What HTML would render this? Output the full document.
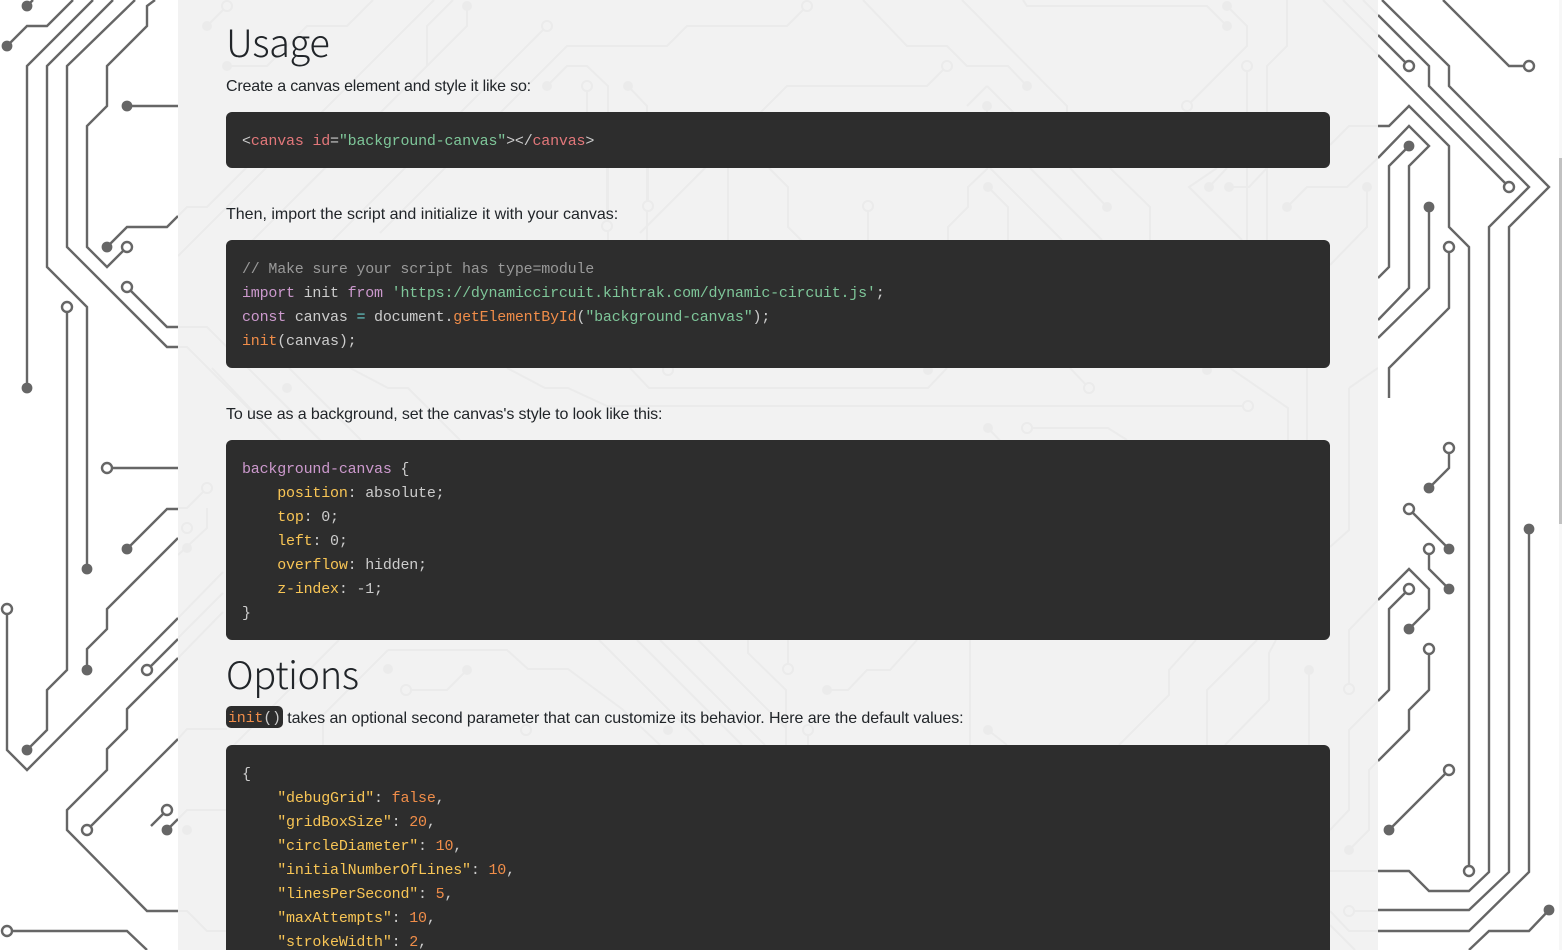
<!DOCTYPE html>
<html><head><meta charset="utf-8"><title>Dynamic Circuit</title>
<style>
html,body{margin:0;padding:0;width:1562px;height:950px;overflow:hidden;background:#fff}
#bg,#ghost{position:absolute;left:0;top:0}
#panel{position:absolute;left:178px;top:0;width:1200px;height:950px;background:#f2f2f2;overflow:hidden}
#ghost{left:-178px}
.t{position:absolute;left:48px;margin:0;color:#212529;font:16px/24px "Liberation Sans",sans-serif;white-space:nowrap}
.h{position:absolute;left:48px;margin:0;color:#212529;font:200 38px/48px "Noto Sans CJK JP","Liberation Sans",sans-serif;letter-spacing:-.4px;white-space:nowrap}
pre{position:absolute;left:48px;width:1072px;margin:0;padding:18px 16px 14px;background:#2d2d2d;border-radius:6px;color:#ccc;font:15px/24px "Liberation Mono",monospace;letter-spacing:-.2px;overflow:hidden}
code{background:#2d2d2d;color:#ccc;font:15px/18px "Liberation Mono",monospace;letter-spacing:-.2px;border-radius:5px;padding:4px 2px 0;display:inline-block;height:18px;vertical-align:baseline;position:relative;top:-1px}
.r{color:#e2777a}.g{color:#7ec699}.c{color:#999}.k{color:#cc99cd}.f{color:#f08d49}.y{color:#f8c555}.o{color:#67cdcc}
#sb{position:absolute;left:1559px;top:158px;width:3px;height:366px;background:#c1c1c1}
#st{position:absolute;left:1559px;top:0;width:3px;height:950px;background:#f7f7f7}
</style></head><body>
<svg id="bg" width="1562" height="950" fill="none" stroke="#666" stroke-width="2.4">
<path d="M33 0L27 6M73 0L47 26H27L7 46M93 0L27 66V388M113 0L47 66V267L87 307V568M135 0L67 66V247L167 347H178M155 0L147 6V26L107 66V106L87 126V247L107 267L127 247M127 106H178M107 247L127 227H167L178 216M127 287L167 327H178M67 307V670L47 690V730L27 750M107 468H178M127 549L167 509H178M178 538L107 609V629L87 649V670M7 609V750L27 770L178 618M147 670L178 639M178 658L127 709V729L107 749V770L67 810V830L147 911H178M87 830L178 739M167 810L151 826M167 830L178 819M7 931H127L147 950"/>
<path d="M1382 0L1449 66V86L1549 187L1509 227V872L1469 910H1378M1378 15L1429 66V86L1529 187L1489 227V872L1469 891H1429L1409 871H1378M1409 66L1378 35M1378 55L1509 187M1529 66H1509L1443 0M1378 126H1389L1409 106L1449 146V227L1469 247V871M1378 158L1409 126L1429 146L1409 166V288L1378 320M1409 146L1389 166V267L1378 278M1429 207V288L1378 338M1449 247V308L1389 368V398M1449 448V468L1429 488M1409 509L1449 549M1429 549V569L1449 589M1378 600L1409 569L1429 589V609L1409 629M1409 589L1389 609V690L1378 701M1429 649V690L1409 710V730L1378 761M1449 770L1389 830M1529 529V872L1469 931H1378M1549 910L1529 931H1489L1469 950"/>
<g fill="#666" stroke="none">
<circle cx="27" cy="6" r="5.4"/><circle cx="7" cy="46" r="5.4"/><circle cx="27" cy="388" r="5.4"/><circle cx="87" cy="569" r="5.4"/><circle cx="127" cy="106" r="5.4"/><circle cx="107" cy="247" r="5.4"/><circle cx="127" cy="549" r="5.4"/><circle cx="87" cy="670" r="5.4"/><circle cx="27" cy="750" r="5.4"/><circle cx="167" cy="830" r="5.4"/>
<circle cx="1409" cy="146" r="5.4"/><circle cx="1429" cy="207" r="5.4"/><circle cx="1429" cy="488" r="5.4"/><circle cx="1449" cy="549" r="5.4"/><circle cx="1449" cy="589" r="5.4"/><circle cx="1409" cy="629" r="5.4"/><circle cx="1389" cy="830" r="5.4"/><circle cx="1529" cy="529" r="5.4"/><circle cx="1549" cy="910" r="5.4"/>
</g>
<g fill="#fff">
<circle cx="127" cy="247" r="5"/><circle cx="127" cy="287" r="5"/><circle cx="67" cy="307" r="5"/><circle cx="107" cy="468" r="5"/><circle cx="7" cy="609" r="5"/><circle cx="147" cy="670" r="5"/><circle cx="87" cy="830" r="5"/><circle cx="167" cy="810" r="5"/><circle cx="7" cy="931" r="5"/>
<circle cx="1409" cy="66" r="5"/><circle cx="1529" cy="66" r="5"/><circle cx="1509" cy="187" r="5"/><circle cx="1449" cy="247" r="5"/><circle cx="1449" cy="448" r="5"/><circle cx="1409" cy="509" r="5"/><circle cx="1429" cy="549" r="5"/><circle cx="1409" cy="589" r="5"/><circle cx="1429" cy="649" r="5"/><circle cx="1449" cy="770" r="5"/><circle cx="1469" cy="871" r="5"/>
</g>
</svg>
<div id="st"></div><div id="sb"></div>
<div id="panel">
<svg id="ghost" width="1562" height="950" fill="none" stroke="#ebebeb" stroke-width="2">
<path d="M227 6L207 26M373 0L347 26H307L267 66H227M434 0L178 256M453 0L427 26V66L300 193M467 6V26L381 112L250 243M547 26L300 273M807 6L787 26H687L667 46H567L380 233M547 86L567 66H587L608 86V240M587 86V112M628 86L647 106V240M863 0L907 46H947L967 66H1008L1027 86M947 66L927 86H787L640 233M962 0L1067 106V112M987 86L967 106M987 86L1025 124M987 106V112M1023 0L1027 6H1207L1227 26M1227 6L1247 26V46L1187 106M1287 0V46L1267 66V240M1247 66V240M1323 0L1378 55M1343 0L1378 35M1363 0L1378 15"/>
<path d="M178 216L187 207H207L247 167M178 327H207L270 390L345 465M178 347H187L300 460M607 168V226M648 168V206M728 168V240M769 168L788 187V227L808 247M868 206V240M988 187L1008 207V240M988 168L968 187V207L948 227V240M990 168L1062 240M1030 168L1102 240M1070 168L1107 207M1110 168L1150 207V240M1217 168L1189 187L1242 240M1209 187L1227 168M1229 187H1249L1267 168M1287 207L1307 187H1347L1378 158M1367 187V227L1330 265M1378 126H1349L1330 145"/>
<path d="M212 368L280 440M289 368L361 440M350 368L388 388H408L460 440M507 368L545 388H568L607 406H1248M630 368L649 388H928L947 368M1070 368L1089 388M988 428L1007 448M1027 428H1108L1127 440M1230 368L1288 408V440M1307 368V440M1349 388L1378 368M1349 388V530L1330 547"/>
<path d="M339 640L229 750M388 650H507L528 669H568L622 709L660 745M388 650L323 715V745M406 690H447L467 670M599 640L704 745M637 640L742 745M660 640L765 745M698 640L786 728M748 640V653L786 690V745M788 640V669M827 690H848L867 670H890L917 640M970 640V745M988 730L1007 745M808 730V745M1196 640L1169 670V695L1119 745M1257 640L1207 690V745M1276 640L1269 653V700L1225 745M1309 670V745M1349 640V689M1378 600L1349 630V689M1378 701L1349 730V810L1330 830M1378 761L1369 770V830L1349 850M1330 871H1378M1349 911H1378M1330 911L1349 931H1378M1330 925L1355 950M178 618L223 572M178 638L223 593M178 658L223 612M178 739L187 729H227M178 819L187 810H227M178 911H187L207 931H227M207 488L187 508H178M207 508V528L178 555"/>
<g fill="#ebebeb" stroke="none">
<circle cx="207" cy="26" r="5"/><circle cx="227" cy="66" r="5"/><circle cx="467" cy="6" r="5"/><circle cx="547" cy="86" r="5"/><circle cx="628" cy="86" r="5"/><circle cx="1027" cy="86" r="5"/><circle cx="987" cy="106" r="5"/><circle cx="1227" cy="6" r="5"/><circle cx="1227" cy="26" r="5"/><circle cx="988" cy="187" r="5"/><circle cx="1107" cy="207" r="5"/><circle cx="1209" cy="187" r="5"/><circle cx="1229" cy="187" r="5"/><circle cx="1287" cy="207" r="5"/><circle cx="1367" cy="187" r="5"/><circle cx="287" cy="388" r="5"/><circle cx="928" cy="370" r="5"/><circle cx="1207" cy="370" r="5"/><circle cx="988" cy="428" r="5"/><circle cx="388" cy="669" r="5"/><circle cx="467" cy="670" r="5"/><circle cx="827" cy="690" r="5"/><circle cx="988" cy="730" r="5"/><circle cx="668" cy="730" r="5"/><circle cx="1309" cy="670" r="5"/><circle cx="187" cy="548" r="5"/><circle cx="187" cy="830" r="5"/><circle cx="1349" cy="850" r="5"/>
</g>
<g fill="#f2f2f2">
<circle cx="227" cy="6" r="5"/><circle cx="547" cy="26" r="5"/><circle cx="807" cy="6" r="5"/><circle cx="587" cy="86" r="5"/><circle cx="947" cy="66" r="5"/><circle cx="1247" cy="66" r="5"/><circle cx="1187" cy="106" r="5"/><circle cx="607" cy="226" r="5"/><circle cx="648" cy="206" r="5"/><circle cx="868" cy="206" r="5"/><circle cx="1089" cy="388" r="5"/><circle cx="1248" cy="406" r="5"/><circle cx="668" cy="370" r="5"/><circle cx="1027" cy="428" r="5"/><circle cx="406" cy="690" r="5"/><circle cx="788" cy="669" r="5"/><circle cx="526" cy="730" r="5"/><circle cx="808" cy="730" r="5"/><circle cx="1349" cy="689" r="5"/><circle cx="207" cy="488" r="5"/><circle cx="187" cy="528" r="5"/><circle cx="1349" cy="911" r="5"/>
</g>
</svg>
<h2 class="h" style="top:17px">Usage</h2>
<p class="t" style="top:75px;letter-spacing:-.18px">Create a canvas element and style it like so:</p>
<pre style="top:112px;height:24px">&lt;<span class="r">canvas</span> <span class="r">id</span>=<span class="g">"background-canvas"</span>&gt;&lt;/<span class="r">canvas</span>&gt;</pre>
<p class="t" style="top:203px">Then, import the script and initialize it with your canvas:</p>
<pre style="top:240px;height:96px"><span class="c">// Make sure your script has type=module</span>
<span class="k">import</span> init <span class="k">from</span> <span class="g">'https://dynamiccircuit.kihtrak.com/dynamic-circuit.js'</span>;
<span class="k">const</span> canvas <span class="o">=</span> document.<span class="f">getElementById</span>(<span class="g">"background-canvas"</span>);
<span class="f">init</span>(canvas);</pre>
<p class="t" style="top:403px;letter-spacing:-.12px">To use as a background, set the canvas's style to look like this:</p>
<pre style="top:440px;height:168px"><span class="k">background-canvas</span> {
    <span class="y">position</span>: absolute;
    <span class="y">top</span>: 0;
    <span class="y">left</span>: 0;
    <span class="y">overflow</span>: hidden;
    <span class="y">z-index</span>: -1;
}</pre>
<h2 class="h" style="top:649px">Options</h2>
<p class="t" style="top:707px;letter-spacing:-.07px"><code><span class="f">init</span>()</code> takes an optional second parameter that can customize its behavior. Here are the default values:</p>
<pre style="top:745px;height:300px">{
    <span class="y">"debugGrid"</span>: <span class="f">false</span>,
    <span class="y">"gridBoxSize"</span>: <span class="f">20</span>,
    <span class="y">"circleDiameter"</span>: <span class="f">10</span>,
    <span class="y">"initialNumberOfLines"</span>: <span class="f">10</span>,
    <span class="y">"linesPerSecond"</span>: <span class="f">5</span>,
    <span class="y">"maxAttempts"</span>: <span class="f">10</span>,
    <span class="y">"strokeWidth"</span>: <span class="f">2</span>,
}</pre>
</div>
</body></html>
